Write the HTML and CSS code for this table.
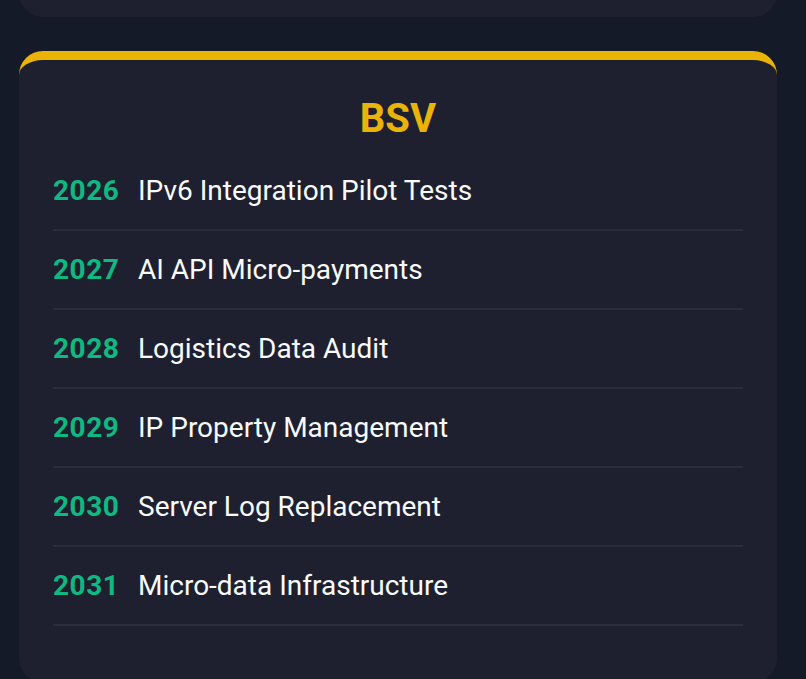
FILE: index.html
```html
<!DOCTYPE html>
<html lang="en">
<head>
<meta charset="utf-8">
<title>BSV Roadmap</title>
<link rel="stylesheet" href="styles.css">
</head>
<body>
<div class="page">
  <div class="prev-card"></div>
  <section class="card">
    <h2 class="card-title">BSV</h2>
    <ul class="timeline">
      <li class="row"><span class="year">2026</span><span class="label">IPv6 Integration Pilot Tests</span></li>
      <li class="row"><span class="year">2027</span><span class="label">AI API Micro-payments</span></li>
      <li class="row"><span class="year">2028</span><span class="label">Logistics Data Audit</span></li>
      <li class="row"><span class="year">2029</span><span class="label">IP Property Management</span></li>
      <li class="row"><span class="year">2030</span><span class="label">Server Log Replacement</span></li>
      <li class="row"><span class="year">2031</span><span class="label">Micro-data Infrastructure</span></li>
    </ul>
  </section>
</div>
</body>
</html>
```

FILE: styles.css
```css
* { box-sizing: border-box; }

html, body {
  margin: 0;
  padding: 0;
  background: #151a28;
  overflow: hidden;
}

body {
  font-family: Roboto, "Liberation Sans", sans-serif;
}

.page {
  padding: 0 29px 0 19px;
}

.prev-card {
  height: 60px;
  margin-top: -43px;
  background: #1e2030;
  border-radius: 24px;
}

.card {
  margin-top: 34px;
  background: #1e2030;
  border-top: 9px solid #eab308;
  border-radius: 24px;
  padding: 36px 34px 56px;
}

.card-title {
  margin: 0 0 10px;
  text-align: center;
  color: #eab308;
  font-size: 40px;
  font-weight: 700;
  line-height: 46px;
}

.timeline {
  list-style: none;
  margin: 0;
  padding: 0;
}

.row {
  display: flex;
  align-items: center;
  padding: 22px 0;
  border-bottom: 2px solid #2a2d3e;
  font-size: 28px;
  line-height: 33px;
}

.year {
  flex: none;
  width: 85px;
  color: #10b981;
  font-weight: 700;
  letter-spacing: 0.5px;
}

.label {
  color: #f8fafc;
}
```
